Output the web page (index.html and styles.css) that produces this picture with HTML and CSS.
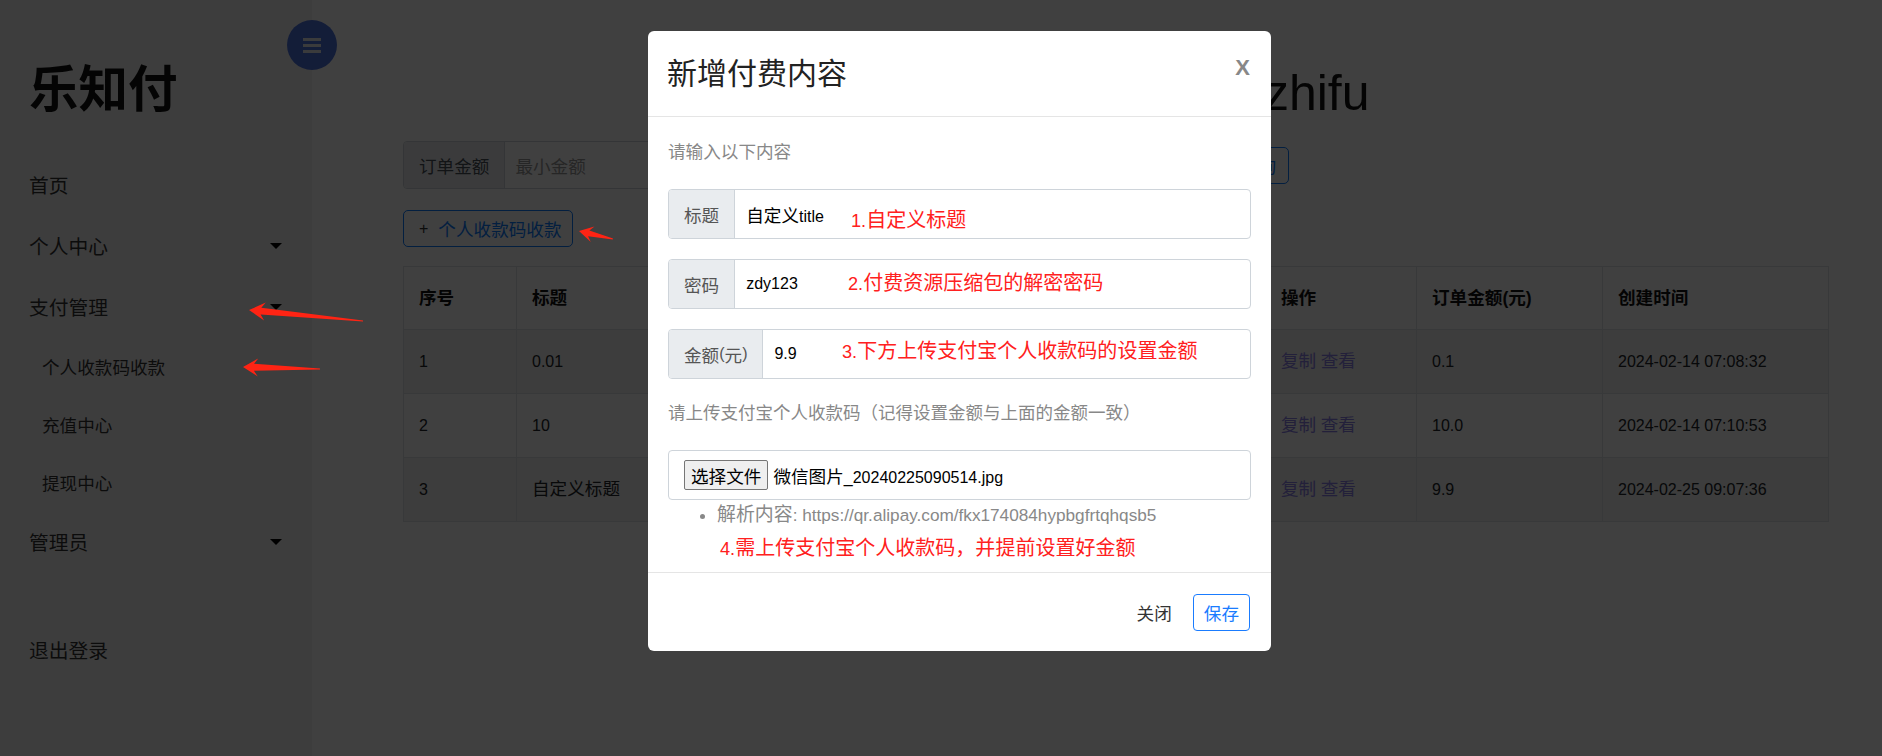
FILE: index.html
```html
<!DOCTYPE html>
<html lang="zh-CN">
<head>
<meta charset="utf-8">
<title>乐知付 - 个人收款码收款</title>
<link rel="stylesheet" href="styles.css">
</head>
<body>
<div class="app">
  <aside class="sidebar">
    <h1 class="logo">乐知付</h1>
    <nav class="menu">
      <a class="menu-item">首页</a>
      <a class="menu-item">个人中心<i class="caret"></i></a>
      <a class="menu-item">支付管理<i class="caret"></i></a>
      <div class="submenu">
        <a class="sub-item">个人收款码收款</a>
        <a class="sub-item">充值中心</a>
        <a class="sub-item">提现中心</a>
      </div>
      <a class="menu-item">管理员<i class="caret"></i></a>
      <a class="menu-item logout">退出登录</a>
    </nav>
  </aside>

  <main class="main">
    <h2 class="page-title">lezhifu</h2>

    <div class="filter">
      <div class="input-group amount-group">
        <span class="ig-label">订单金额</span>
        <span class="ig-input">最小金额</span>
        <span class="ig-sep"></span>
        <span class="ig-input"></span>
      </div>
      <div class="input-group date-group">
        <span class="ig-label"></span>
        <span class="ig-input"></span>
      </div>
      <button class="btn-outline btn-query">查询</button>
    </div>

    <button class="btn-outline btn-add"><span class="plus">+</span>个人收款码收款</button>

    <table class="data-table">
      <colgroup>
        <col class="c-no"><col class="c-title"><col class="c-pwd"><col class="c-code"><col class="c-op"><col class="c-amount"><col class="c-time">
      </colgroup>
      <thead>
        <tr><th>序号</th><th>标题</th><th></th><th></th><th>操作</th><th>订单金额(元)</th><th>创建时间</th></tr>
      </thead>
      <tbody>
        <tr><td>1</td><td>0.01</td><td></td><td></td><td><a class="link">复制</a> <a class="link">查看</a></td><td>0.1</td><td>2024-02-14 07:08:32</td></tr>
        <tr><td>2</td><td>10</td><td></td><td></td><td><a class="link">复制</a> <a class="link">查看</a></td><td>10.0</td><td>2024-02-14 07:10:53</td></tr>
        <tr><td>3</td><td><span class="zh">自定义标题</span></td><td></td><td></td><td><a class="link">复制</a> <a class="link">查看</a></td><td>9.9</td><td>2024-02-25 09:07:36</td></tr>
      </tbody>
    </table>
  </main>
</div>

<button class="toggle" aria-label="菜单"><span></span><span></span><span></span></button>

<div class="backdrop"></div>

<div class="modal">
  <div class="modal-header">
    <h3 class="modal-title">新增付费内容</h3>
    <span class="close">X</span>
  </div>
  <div class="modal-body">
    <p class="hint">请输入以下内容</p>

    <div class="fg">
      <span class="fg-label"><span class="zh">标题</span></span>
      <span class="fg-value"><span class="zh">自定义</span>title</span>
      <span class="note note-1">1.<span class="zh">自定义标题</span></span>
    </div>

    <div class="fg">
      <span class="fg-label"><span class="zh">密码</span></span>
      <span class="fg-value">zdy123</span>
      <span class="note note-2">2.<span class="zh">付费资源压缩包的解密密码</span></span>
    </div>

    <div class="fg">
      <span class="fg-label"><span class="zh">金额</span>(<span class="zh">元</span>)</span>
      <span class="fg-value">9.9</span>
      <span class="note note-3">3.<span class="zh">下方上传支付宝个人收款码的设置金额</span></span>
    </div>

    <p class="hint hint-upload">请上传支付宝个人收款码（记得设置金额与上面的金额一致）</p>

    <div class="file-box">
      <span class="file-btn"><span class="zh">选择文件</span></span>
      <span class="file-name"><span class="zh">微信图片</span>_20240225090514.jpg</span>
    </div>

    <ul class="parse-list">
      <li><span class="zh">解析内容</span>: https://qr.alipay.com/fkx174084hypbgfrtqhqsb5</li>
    </ul>

    <p class="note-line">4.<span class="zh">需上传支付宝个人收款码，并提前设置好金额</span></p>
  </div>
  <div class="modal-footer">
    <button class="btn-close"><span class="zh">关闭</span></button>
    <button class="btn-save"><span class="zh">保存</span></button>
  </div>
</div>

<svg class="annotations" width="1882" height="756" viewBox="0 0 1882 756" aria-hidden="true">
  <polygon points="249,310 265.8,302.6 261.3,307.7 363,320.6 363,321.4 260.6,314.6 264.1,320.5" />
  <polygon points="243,367 258.2,358.4 254.1,363.8 320,368.6 320,369.4 253.9,370.8 257.8,376.4" />
  <polygon points="579,231 594.5,226.4 589.4,230.4 613,238.6 612.8,239.4 588.1,236.2 590.8,242" />
</svg>
</body>
</html>
```

FILE: styles.css
```css
* { box-sizing: border-box; }

html, body {
  margin: 0;
  padding: 0;
}

body {
  position: relative;
  width: 1882px;
  height: 756px;
  overflow: hidden;
  background: #fff;
  color: #212529;
  font-family: "Liberation Sans", "Noto Sans CJK SC", sans-serif;
  font-size: 16px;
}

.zh { font-size: 1.1em; }

p, ul, h1, h2, h3 { margin: 0; }

button {
  font-family: inherit;
  cursor: pointer;
}

/* ---------- layout ---------- */
.app {
  display: flex;
  min-height: 756px;
}

.sidebar {
  flex: none;
  width: 312px;
  background: #f3f3f3;
  padding: 64px 30px 0 29px;
}

.logo {
  font-size: 49.5px;
  line-height: 52px;
  font-weight: bold;
  color: #111;
  margin-bottom: 38px;
}

.menu {
  display: flex;
  flex-direction: column;
}

.menu-item {
  display: flex;
  align-items: center;
  justify-content: space-between;
  height: 61px;
  font-size: 19.8px;
  color: #333;
}

.menu-item.logout { margin-top: 47px; }

.sub-item {
  display: flex;
  align-items: center;
  height: 58px;
  padding-left: 13px;
  font-size: 17.6px;
  color: #333;
}

.caret {
  width: 0;
  height: 0;
  border-left: 6px solid transparent;
  border-right: 6px solid transparent;
  border-top: 6px solid #000;
}

.toggle {
  position: absolute;
  left: 287px;
  top: 20px;
  width: 50px;
  height: 50px;
  border: none;
  border-radius: 50%;
  background: #4e73df;
  display: flex;
  flex-direction: column;
  align-items: center;
  justify-content: center;
  gap: 3px;
  padding: 0;
}

.toggle span {
  display: block;
  width: 18px;
  height: 3px;
  background: #e8eaf0;
}

.main {
  flex: 1;
  padding: 80px 54px 0 91px;
}

.page-title {
  font-size: 50px;
  line-height: 26px;
  font-weight: normal;
  color: #111;
  padding-left: 822px;
}

/* ---------- filter ---------- */
.filter {
  display: flex;
  align-items: center;
  gap: 12px;
  margin-top: 35px;
  height: 48px;
}

.input-group {
  display: flex;
  height: 48px;
  border: 1px solid #ced4da;
  border-radius: 4px;
  overflow: hidden;
}

.amount-group { width: 560px; }
.date-group { width: 241px; }

.ig-label {
  display: flex;
  align-items: center;
  padding: 0 15px;
  background: #e9ecef;
  border-right: 1px solid #ced4da;
  color: #495057;
  font-size: 17.6px;
}

.date-group .ig-label { width: 100px; }

.ig-input {
  flex: 1;
  display: flex;
  align-items: center;
  padding-left: 10px;
  color: #999;
  font-size: 17.6px;
}

.ig-sep {
  width: 28px;
  background: #e9ecef;
  border-left: 1px solid #ced4da;
  border-right: 1px solid #ced4da;
}

.btn-outline {
  height: 37px;
  border: 1px solid #0d7bff;
  border-radius: 5px;
  background: transparent;
  color: #0d7bff;
  font-size: 17.6px;
  display: flex;
  align-items: center;
}

.btn-query { padding: 0 12px; }

.btn-add {
  margin-top: 21px;
  padding: 0 10px 0 15px;
}

.plus {
  font-size: 16px;
  color: #333;
  margin-right: 10px;
}

/* ---------- table ---------- */
.data-table {
  margin-top: 19px;
  width: 100%;
  table-layout: fixed;
  border-collapse: collapse;
}

.c-no { width: 113px; }
.c-title { width: 244px; }
.c-pwd { width: 250px; }
.c-code { width: 255px; }
.c-op { width: 151px; }
.c-amount { width: 186px; }
.c-time { width: 226px; }

.data-table th,
.data-table td {
  border: 1px solid #dee2e6;
  padding: 19px 15px;
  height: 63px;
  line-height: 24px;
  text-align: left;
  white-space: nowrap;
  overflow: hidden;
}

.data-table th {
  font-size: 17.6px;
  font-weight: bold;
  color: #111;
}

.data-table td { color: #212529; }

.data-table tbody tr:nth-child(odd) { background: rgba(0, 0, 0, 0.05); }

.link {
  color: #8a80e8;
  font-size: 17.6px;
}

/* ---------- modal ---------- */
.backdrop {
  position: absolute;
  inset: 0;
  background: rgba(0, 0, 0, 0.75);
}

.modal {
  position: absolute;
  left: 648px;
  top: 31px;
  width: 623px;
  background: #fff;
  border-radius: 6px;
  display: flex;
  flex-direction: column;
}

.modal-header {
  height: 86px;
  border-bottom: 1px solid #e5e5e5;
  padding: 0 21px 0 19px;
  display: flex;
  align-items: center;
  justify-content: space-between;
}

.modal-title {
  font-size: 30px;
  line-height: 40px;
  font-weight: normal;
  color: #222;
}

.close {
  font-size: 22px;
  font-weight: bold;
  line-height: 1;
  color: #888;
  margin-bottom: 11px;
}

.modal-body {
  padding: 23px 20px 11px;
}

.hint {
  line-height: 24px;
  font-size: 17.6px;
  color: #888;
}

.hint-upload {
  margin-top: 22px;
  font-size: 17.5px;
}

.fg {
  position: relative;
  display: flex;
  height: 50px;
  margin-top: 20px;
  border: 1px solid #ced4da;
  border-radius: 4px;
}

.hint + .fg { margin-top: 25px; }

.fg-label {
  display: flex;
  align-items: center;
  padding: 0 15px;
  background: #e9ecef;
  border-right: 1px solid #ced4da;
  border-radius: 3px 0 0 3px;
  color: #555;
}

.fg-value {
  display: flex;
  align-items: baseline;
  align-self: center;
  padding-left: 11px;
  color: #000;
}

.note {
  position: absolute;
  line-height: 24px;
  font-size: 18.2px;
  color: #ff2020;
  white-space: nowrap;
}

.note-1 { left: 182px; top: 18px; }
.note-2 { left: 179px; top: 11px; }
.note-3 { left: 173px; top: 9px; }

.file-box {
  display: flex;
  align-items: center;
  height: 50px;
  margin-top: 25px;
  padding-left: 15px;
  border: 1px solid #ced4da;
  border-radius: 4px;
}

.file-btn {
  display: flex;
  align-items: center;
  height: 30px;
  padding: 0 6px;
  background: #efefef;
  border: 1px solid #767676;
  border-radius: 2px;
  margin-right: 5px;
  color: #000;
}

.file-name { color: #000; }

.parse-list {
  margin-top: 3px;
  padding-left: 49px;
  line-height: 24px;
  font-size: 17.2px;
  color: #888;
}

.note-line {
  margin-top: 9px;
  padding-left: 52px;
  line-height: 24px;
  font-size: 18.2px;
  color: #ff2020;
}

.modal-footer {
  height: 79px;
  border-top: 1px solid #e5e5e5;
  padding-right: 21px;
  display: flex;
  align-items: center;
  justify-content: flex-end;
}

.btn-close {
  border: none;
  background: none;
  padding: 0;
  margin-right: 21px;
  color: #333;
  font-size: 16px;
}

.btn-save {
  height: 37px;
  padding: 0 10px;
  border: 1px solid #1a7cff;
  border-radius: 4px;
  background: #fff;
  color: #1a7cff;
  font-size: 16px;
}

/* ---------- annotations ---------- */
.annotations {
  position: absolute;
  left: 0;
  top: 0;
  pointer-events: none;
}

.annotations polygon { fill: #ff2414; }
```
